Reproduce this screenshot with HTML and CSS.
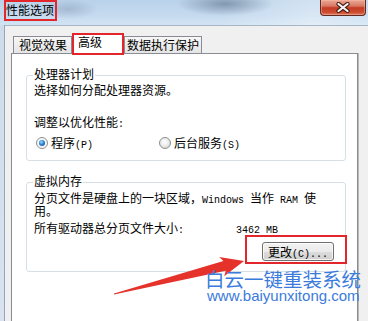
FILE: index.html
```html
<!DOCTYPE html>
<html lang="zh-CN">
<head>
<meta charset="utf-8">
<title>性能选项</title>
<link rel="stylesheet" href="styles.css">
</head>
<body>
<div class="window">
  <div class="titlebar">
    <div class="title">性能选项</div>
    <div class="close">
      <svg width="14" height="11" viewBox="0 0 14 11">
        <path d="M2.5 2 L11.5 9 M11.5 2 L2.5 9" stroke="#4b1d15" stroke-width="4.2" stroke-linecap="round" fill="none"/>
        <path d="M2.5 2 L11.5 9 M11.5 2 L2.5 9" stroke="#f4f4f4" stroke-width="2.2" stroke-linecap="round" fill="none"/>
      </svg>
    </div>
  </div>
  <div class="frame">
    <div class="edge"></div>
    <div class="client">
      <div class="tabs">
        <div class="tab t1">视觉效果</div>
        <div class="tab t2">高级</div>
        <div class="tab t3">数据执行保护</div>
      </div>
      <div class="panel">
        <div class="group g1">
          <div class="gtitle">处理器计划</div>
          <div class="line p1">选择如何分配处理器资源。</div>
          <div class="line p2">调整以优化性能<span class="m">:</span></div>
          <div class="radios">
            <div class="opt opt1"><span class="radio on"><span class="dot"></span></span><span>程序<span class="m">(P)</span></span></div>
            <div class="opt opt2"><span class="radio"></span><span>后台服务<span class="m">(S)</span></span></div>
          </div>
        </div>
        <div class="group g2">
          <div class="gtitle">虚拟内存</div>
          <div class="desc">分页文件是硬盘上的一块区域，<span class="m">Windows </span>当作<span class="m"> RAM </span>使<br>用。</div>
          <div class="sizes"><span class="label">所有驱动器总分页文件大小<span class="m">:</span></span><span class="val"><span class="m">3462 MB</span></span></div>
          <div class="btnrow"><button class="btn" type="button"><span class="btxt">更改<span class="m">(C)...</span></span></button></div>
        </div>
      </div>
    </div>
  </div>

  <div class="callout"></div>
  <svg class="arrow" viewBox="0 0 368 321" width="368" height="321">
    <polygon points="114,293.6 223.4,261.1 219.2,256.9 244,261 224.2,276.3 225.8,270.8 114,294.6" fill="#e5322b"/>
  </svg>
  <div class="watermark">
    <div class="wm1">白云一键重装系统</div>
    <div class="wm2">www.baiyunxitong.com</div>
  </div>
</div>
</body>
</html>
```

FILE: styles.css
```css
html, body {
  margin: 0;
  padding: 0;
}
body {
  width: 368px;
  height: 321px;
  overflow: hidden;
  background: #f0f0f0;
  font-family: "Noto Sans CJK SC", sans-serif;
  font-size: 12px;
  color: #000;
}
.window {
  position: relative;
  width: 368px;
  height: 321px;
  overflow: hidden;
  display: flex;
  flex-direction: column;
}
.titlebar {
  flex: none;
  height: 25px;
  display: flex;
  justify-content: space-between;
  align-items: flex-start;
  background:
    radial-gradient(ellipse 48px 12px at 225px 4px, rgba(70, 92, 118, 0.5), rgba(70, 92, 118, 0) 100%),
    radial-gradient(ellipse 30px 10px at 68px 9px, rgba(95, 120, 148, 0.3), rgba(95, 120, 148, 0) 100%),
    linear-gradient(to right, rgba(255,255,255,0) 0%, rgba(255,255,255,0) 60%, rgba(255,255,255,0.35) 85%, rgba(255,255,255,0.2) 100%),
    linear-gradient(to bottom, #bad2ea 0%, #c5daef 60%, #d2e4f4 100%);
}
.title {
  margin-left: 4px;
  border: 2px solid #e3262c;
  line-height: 15px;
  padding: 0 1px 2px 0;
  white-space: nowrap;
}
.close {
  width: 46px;
  height: 16px;
  margin-right: 2px;
  box-sizing: border-box;
  border: 1px solid #5e2a22;
  border-top: none;
  border-radius: 0 0 4px 4px;
  background: linear-gradient(to bottom, #e9a896 0%, #d97a64 40%, #c53c24 52%, #cc4a30 80%, #dc7a5e 100%);
  box-shadow: inset 0 0 0 1px rgba(255, 190, 170, 0.45);
  display: flex;
  align-items: center;
  justify-content: center;
}
.frame {
  flex: 1;
  display: flex;
  min-height: 0;
}
.edge {
  width: 4px;
  background: linear-gradient(to bottom, #cddbea, #d8e3ef);
  border-right: 1px solid #97a5b4;
}
.client {
  flex: 1;
  display: flex;
  flex-direction: column;
  padding-left: 6px;
  border-top: 1px solid #a7b6c6;
  background: #f0f0f0;
}
.tabs {
  flex: none;
  display: flex;
  align-items: flex-end;
  height: 20px;
  margin-top: 7px;
  padding-left: 2px;
}
.tab {
  box-sizing: border-box;
  height: 17px;
  border: 1px solid #898c95;
  border-bottom: none;
  background: linear-gradient(to bottom, #f7f7f7, #e5e5e5);
  line-height: 16px;
  white-space: nowrap;
}
.t1 {
  width: 59px;
  padding-left: 5px;
}
.t2 {
  width: 52px;
  height: 22px;
  border: 2px solid #e3262c;
  background: #fff;
  margin-bottom: -2px;
  position: relative;
  z-index: 1;
  line-height: 14px;
  padding-left: 4px;
}
.t3 {
  width: 78px;
  padding-left: 2px;
}
.panel {
  flex: 1;
  width: 347px;
  box-sizing: border-box;
  background: #fff;
  border: 1px solid #898c95;
  border-bottom: none;
  box-shadow: 1px 0 0 #b9b9b9;
}
.group {
  width: 320px;
  box-sizing: border-box;
  margin-left: 14px;
  border: 1px solid #d5dfe5;
  border-radius: 3px;
  padding: 0 11px 9px 7px;
}
.g1 {
  margin-top: 21px;
}
.g2 {
  margin-top: 21px;
  padding-bottom: 10px;
}
.gtitle {
  width: fit-content;
  margin: -9px 0 0 -1px;
  padding: 0 1px;
  background: #fff;
  line-height: 14px;
  white-space: nowrap;
}
.line {
  line-height: 16px;
  white-space: nowrap;
}
.p1 {
  margin-top: 1px;
}
.p2 {
  margin-top: 16px;
}
.radios {
  display: flex;
  align-items: center;
  height: 16px;
  margin-top: 5px;
}
.opt {
  display: flex;
  align-items: center;
  gap: 3px;
  line-height: 16px;
  white-space: nowrap;
}
.opt1 {
  width: 123px;
  margin-left: 2px;
}
.radio {
  flex: none;
  width: 12px;
  height: 12px;
  box-sizing: border-box;
  border-radius: 50%;
  border: 1px solid #8e8f8f;
  background: radial-gradient(circle at 45% 40%, #ffffff 0%, #ececec 45%, #cdcdcd 100%);
  display: flex;
  align-items: center;
  justify-content: center;
}
.radio.on {
  background: #f6f6f6;
}
.dot {
  width: 6px;
  height: 6px;
  border-radius: 50%;
  background: radial-gradient(circle at 40% 35%, #9bdcff 0%, #2d86d8 45%, #0b3f86 100%);
}
.desc {
  margin-top: 3px;
  line-height: 13px;
  white-space: nowrap;
}
.sizes {
  display: flex;
  margin-top: 3px;
  line-height: 16px;
  white-space: nowrap;
}
.label {
  width: 202px;
}
.val {
  line-height: 16px;
}
.btnrow {
  display: flex;
  justify-content: flex-end;
  margin-top: 6px;
}
.btn {
  width: 72px;
  height: 19px;
  box-sizing: border-box;
  margin: 0;
  padding: 0;
  border: 1px solid #707070;
  border-radius: 3px;
  background: linear-gradient(to bottom, #f2f2f2 0%, #ebebeb 50%, #dddddd 50%, #cfcfcf 100%);
  box-shadow: inset 0 0 0 1px rgba(255, 255, 255, 0.75);
  display: flex;
  align-items: center;
  justify-content: center;
  font-family: "Noto Sans CJK SC", sans-serif;
  font-size: 12px;
  color: #000;
  white-space: nowrap;
}
.btxt {
  line-height: 16px;
}
.m {
  font-family: "Liberation Mono", monospace;
  font-size: 10px;
  line-height: 0;
}
.callout {
  position: absolute;
  left: 245px;
  top: 235px;
  width: 102px;
  height: 29px;
  box-sizing: border-box;
  border: 2px solid #e3262c;
}
.arrow {
  position: absolute;
  left: 0;
  top: 0;
}
.watermark {
  position: absolute;
  left: 205px;
  top: 270px;
  color: #3b7bdc;
  white-space: nowrap;
}
.wm1 {
  font-size: 19.5px;
  line-height: 18px;
}
.wm2 {
  margin-left: 2px;
  font-family: "Liberation Sans", Arial, sans-serif;
  font-size: 15px;
  line-height: 15px;
}
```
